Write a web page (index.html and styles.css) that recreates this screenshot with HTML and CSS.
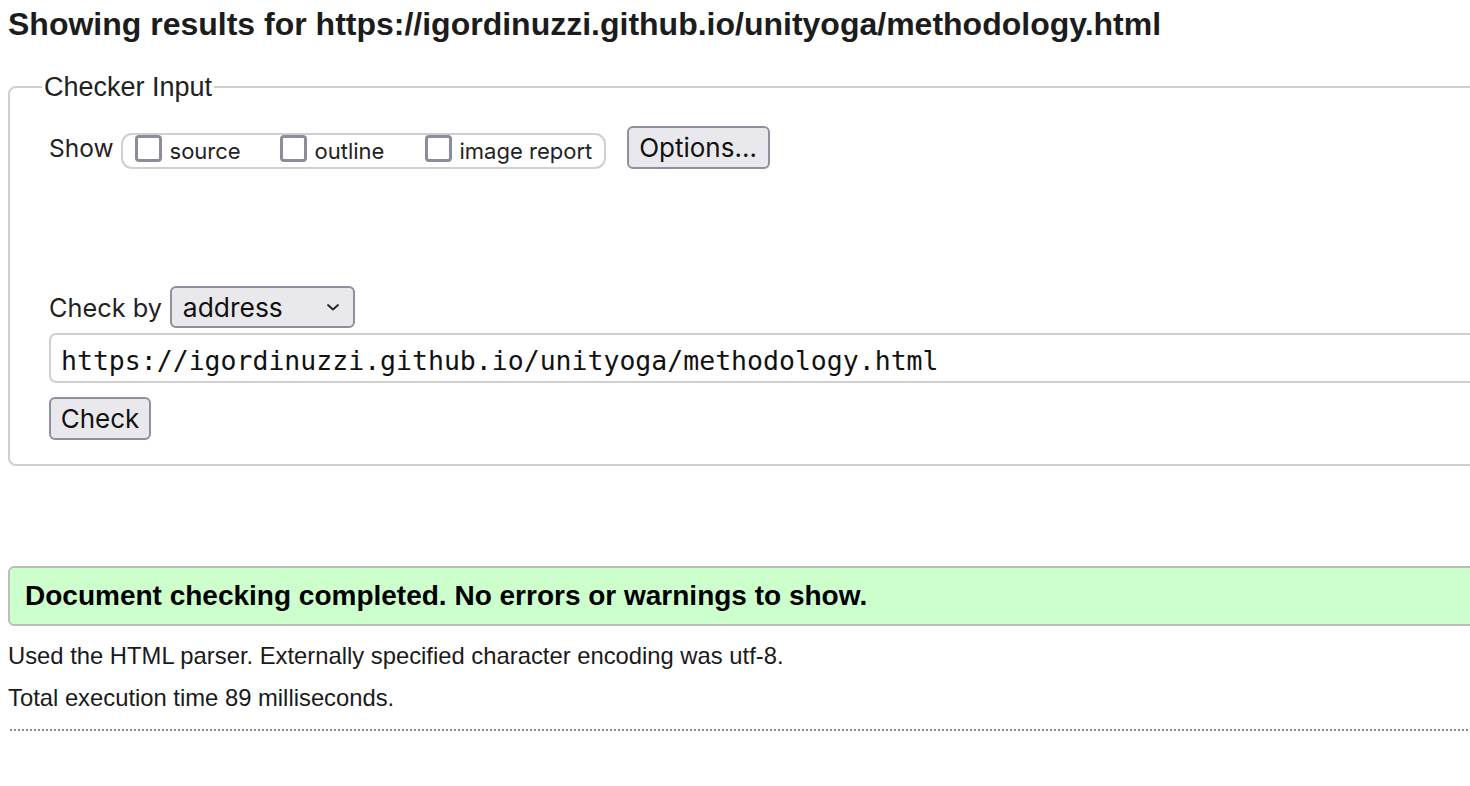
FILE: index.html
```html
<!DOCTYPE html>
<html>
<head>
<meta charset="utf-8">
<link rel="stylesheet" href="styles.css">
</head>
<body>
<h2 class="title">Showing results for https://igordinuzzi.github.io/unityoga/methodology.html</h2>
<fieldset class="checker">
  <legend class="legend">Checker Input</legend>
  <div class="show-row">
    <span class="label">Show</span>
    <div class="show-group">
      <label class="opt"><span class="box"></span>source</label>
      <label class="opt"><span class="box"></span>outline</label>
      <label class="opt"><span class="box"></span>image report</label>
    </div>
    <span class="btn options">Options…</span>
  </div>
  <div class="by-row">
    <span class="label">Check by</span>
    <span class="select">address<svg class="chev" width="14" height="10" viewBox="0 0 14 10"><path d="M2 3 L7 7.5 L12 3" fill="none" stroke="#222" stroke-width="1.8" stroke-linecap="round" stroke-linejoin="round"/></svg></span>
  </div>
  <div class="url">https://igordinuzzi.github.io/unityoga/methodology.html</div>
  <span class="btn check">Check</span>
</fieldset>
<div class="success">Document checking completed. No errors or warnings to show.</div>
<p class="info">Used the HTML parser. Externally specified character encoding was utf-8.</p>
<p class="info">Total execution time 89 milliseconds.</p>
<hr class="dots">
</body>
</html>
```

FILE: styles.css
```css
html { overflow-x: hidden; }
body {
  margin: 0;
  padding: 0 0 0 8px;
  font-family: "Liberation Sans", Arial, sans-serif;
  color: #1a1a1a;
  background: #fff;
  width: 1520px;
}
.title {
  font-size: 32px;
  font-weight: bold;
  margin: 6px 0 0 0;
  line-height: 36px;
  color: #1c1c1c;
}
.checker {
  margin: 30px 0 0 0;
  padding: 24px 0 24px 39px;
  border: 2px solid #cfcfcf;
  border-radius: 8px;
  min-width: 0;
}
.legend {
  font-family: "Liberation Sans", Arial, sans-serif;
  font-size: 27px;
  line-height: 30px;
  padding: 0 2px;
  margin-left: -7px;
  color: #222;
}
.show-row {
  display: flex;
  align-items: center;
  height: 43px;
}
.label {
  font-family: Inter, "Noto Sans", sans-serif;
  font-size: 24.5px;
  color: #222;
}
.by-row .label { font-size: 25.3px; }
.show-group {
  display: flex;
  align-items: center;
  align-self: flex-end;
  width: 485px;
  height: 36px;
  margin-left: 7px;
  border: 2px solid #cfcfcf;
  border-radius: 11px;
  padding-left: 12px;
  box-sizing: border-box;
}
.opt {
  display: flex;
  align-items: center;
  font-family: Inter, "Noto Sans", sans-serif;
  font-size: 22px;
  color: #222;
}
.opt:nth-child(1) { width: 145px; }
.opt:nth-child(2) { width: 145px; }
.box {
  width: 21px;
  height: 21px;
  border: 3px solid #8e8c9c;
  border-radius: 4px;
  margin-right: 8px;
  margin-top: -5px;
}
.btn {
  display: inline-flex;
  align-items: center;
  justify-content: center;
  background: #e9e9ed;
  border: 2px solid #8f8f9d;
  border-radius: 6px;
  font-family: Inter, "Noto Sans", sans-serif;
  font-size: 26px;
  color: #111;
  box-sizing: border-box;
}
.options {
  width: 143px;
  height: 43px;
  margin-left: 21px;
}
.by-row {
  display: flex;
  align-items: center;
  margin-top: 117px;
  height: 42px;
}
.select {
  display: inline-flex;
  align-items: center;
  justify-content: space-between;
  box-sizing: border-box;
  width: 185px;
  height: 42px;
  margin-left: 8px;
  padding: 0 13px 0 11px;
  background: #e9e9ed;
  border: 2px solid #8f8f9d;
  border-radius: 6px;
  font-family: Inter, "Noto Sans", sans-serif;
  font-size: 26.4px;
  color: #111;
}
.url {
  margin-top: 5px;
  height: 50px;
  box-sizing: border-box;
  border: 2px solid #cfcfcf;
  border-radius: 7px;
  padding: 4px 0 0 10px;
  display: flex;
  align-items: center;
  font-family: "DejaVu Sans Mono", monospace;
  font-size: 26.5px;
  color: #111;
}
.check {
  margin-top: 14px;
  width: 102px;
  height: 43px;
}
.success {
  margin-top: 100px;
  height: 60px;
  box-sizing: border-box;
  background: #ccffcc;
  border: 2px solid #bdbdbd;
  border-radius: 6px;
  padding-left: 15px;
  display: flex;
  align-items: center;
  font-size: 28px;
  font-weight: bold;
  color: #000;
}
.info {
  margin: 18px 0 0 0;
  font-size: 23.8px;
  line-height: 24px;
  color: #1a1a1a;
}
.info + .info { margin-top: 18px; }
.dots {
  margin: 19px 0 0 2px;
  border: 0;
  border-top: 2px dotted #8a8a8a;
  height: 0;
}
```
